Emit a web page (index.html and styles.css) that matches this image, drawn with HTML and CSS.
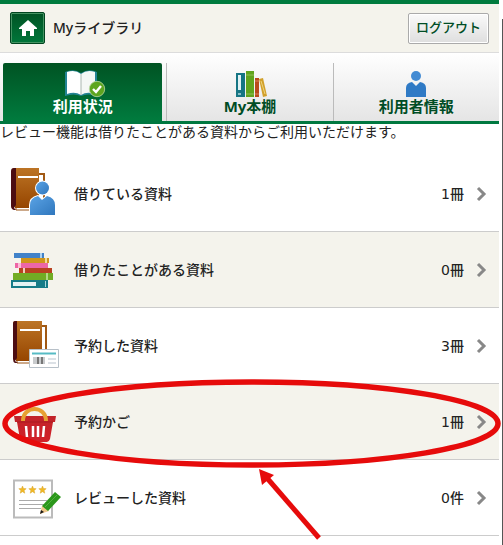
FILE: index.html
```html
<!DOCTYPE html>
<html lang="ja">
<head>
<meta charset="utf-8">
<meta name="viewport" content="width=device-width, initial-scale=1">
<title>Myライブラリ</title>
<link rel="stylesheet" href="styles.css">
</head>
<body>
<div class="page">
  <header class="header">
    <a class="home" href="#" aria-label="ホーム">
      <svg width="18" height="16" viewBox="0 0 18 16"><path d="M9 0 18 8v1h-3v7h-4v-5H7v5H3V9H0V8Z" fill="#fff"/></svg>
    </a>
    <h1 class="title">Myライブラリ</h1>
    <button class="logout" type="button">ログアウト</button>
  </header>

  <nav class="tabs">
    <a class="tab active" href="#">
      <svg width="42" height="28" viewBox="-2 0 42 28" overflow="visible">
        <path d="M1 2Q10-2 17 3 25-2 33 2V26Q24 23 17 26 10 23 1 26Z" fill="#238494"/>
        <path d="M3 2Q11-1 17 4V25Q11 21 3 24Z" fill="#fff"/>
        <path d="M31 2Q23-1 17 4V25Q23 21 31 24Z" fill="#f4f7f5"/>
        <path d="M17 4v21" stroke="#a9b6b0"/>
        <circle cx="33" cy="19" r="7.7" fill="#5da51f" stroke="#b9d8a5" stroke-width=".8"/>
        <path d="m29 19 3 3 5-6" fill="none" stroke="#fff" stroke-width="2.4"/>
      </svg>
      <span>利用状況</span>
    </a>
    <a class="tab" href="#">
      <svg width="32" height="28" viewBox="-1 0 32 28" overflow="visible">
        <path d="M1 3h9v24H1z" fill="#167584"/><path d="M3 5h3v15H3z" fill="#e1f2f4"/><path d="M3 23h3v2H3z" fill="#8bc1c8"/>
        <path d="M11 1h8v26h-8z" fill="#62a51e"/><path d="M11 5h8M11 24h8" stroke="#91bf55"/>
        <path d="M20 8h4v19h-4z" fill="#b94a1b"/><path d="M20 11h4M20 24h4" stroke="#d88158"/>
        <path d="m24 9 4-1 4 18-4 1Z" fill="#d1a02b"/><path d="m26 11 4 13" stroke="#f0d47c"/>
      </svg>
      <span>My本棚</span>
    </a>
    <a class="tab" href="#">
      <svg width="20" height="28" viewBox="0 0 20 28">
        <circle cx="10" cy="6" r="5" fill="#438bd3"/>
        <path d="M0 27v-9q0-5 6-6l4 4 4-4q6 1 6 6v9Z" fill="#2f7ac5"/>
      </svg>
      <span>利用者情報</span>
    </a>
  </nav>

  <main>
    <p class="notice">レビュー機能は借りたことがある資料からご利用いただけます。</p>
    <ul class="list">
      <li><a class="row" href="#">
        <svg class="icon" viewBox="8 8 54 60">
          <defs>
            <linearGradient id="leather" x2="0" y2="1"><stop stop-color="#bc7425"/><stop offset="1" stop-color="#964500"/></linearGradient>
            <linearGradient id="person" x2="1" y2="1"><stop stop-color="#5aa3e5"/><stop offset="1" stop-color="#3077bd"/></linearGradient>
          </defs>
          <path d="M15 18h29v32H33" fill="none" stroke="#a15914" stroke-width="2"/>
          <path d="M16 49h24v5H16z" fill="#fff" stroke="#9a5516"/>
          <path d="M14 12h25v40H15v-3h-3V14q0-2 2-2Z" fill="url(#leather)"/>
          <path d="M14 12h2v37l-2 3 2 2h-2q-3-1-3-4V15q0-3 3-3Z" fill="#4c0d12"/>
          <path d="M18 21h20" stroke="#fff" stroke-width="2"/>
          <path d="M30 59V49q0-7 8-9l4 4 5-4q8 2 8 9v10Z" fill="url(#person)" stroke="#fff" stroke-width="2" paint-order="stroke"/>
          <circle cx="42.500" cy="32" r="6.500" fill="url(#person)" stroke="#fff" stroke-width="2" paint-order="stroke"/>
        </svg>
        <span class="label">借りている資料</span><span class="count">1冊</span>
        <svg class="chevron" viewBox="0 0 12 16"><path d="m2 2 6 6-6 6"/></svg>
      </a></li>
      <li><a class="row" href="#">
        <svg class="icon" viewBox="8 8 54 60">
          <path d="M14 21h30v5H14z" fill="#4182c9"/><path d="M40 21h2v5h-2z" fill="#add1ef"/>
          <path d="M21 26h28v5H21z" fill="#cf951c"/><path d="M45 26h2v5h-2z" fill="#f1dc98"/>
          <path d="M15 31h33v5H15z" fill="#ed66a6"/><path d="M18 31h3v5h-3z" fill="#ffbad8"/>
          <path d="M19 36h33v5H19z" fill="#b94220"/><path d="M23 36h2v5h-2z" fill="#efd0bd"/>
          <path d="M13 41h40v7H13z" fill="#72ac24"/><path d="M46 41h2v7h-2z" fill="#b4d884"/>
          <path d="M11 48h37v8H11z" fill="#167b87"/><path d="M13 50h23v4H13z" fill="#e4f2f3"/><path d="M45 49h1v6h-1z" fill="#a9d8dc"/>
        </svg>
        <span class="label">借りたことがある資料</span><span class="count">0冊</span>
        <svg class="chevron" viewBox="0 0 12 16"><path d="m2 2 6 6-6 6"/></svg>
      </a></li>
      <li><a class="row" href="#">
        <svg class="icon" viewBox="8 8 54 60">
          <path d="M16 18h30v32H35" fill="none" stroke="#a15914" stroke-width="2"/>
          <path d="M17 50h24v5H17z" fill="#fff" stroke="#9a5516"/>
          <path d="M16 13h26v40H16v-3h-3V15q0-2 3-2Z" fill="url(#leather)"/>
          <path d="M15 13h2v37l-2 3 3 2h-3q-2-1-2-4V16q0-3 2-3Z" fill="#4c0d12"/>
          <path d="M20 22h20" stroke="#fff" stroke-width="2"/>
          <path d="M29.500 41.500h29v18h-29z" fill="#fff" stroke="#b7c0c8"/>
          <path d="M32 45.500h24" stroke="#56bbc4" stroke-width="2"/>
          <path d="M34 49v7m2-7v7m4-7v7m4-7v7" stroke="#92979b"/><path d="M38 49v7m4-7v7" stroke="#777" stroke-width="2"/>
          <path d="M48 51h8m-8 4h8" stroke="#dce1e6" stroke-width="2"/>
        </svg>
        <span class="label">予約した資料</span><span class="count">3冊</span>
        <svg class="chevron" viewBox="0 0 12 16"><path d="m2 2 6 6-6 6"/></svg>
      </a></li>
      <li class="marked"><a class="row" href="#">
        <svg class="icon" viewBox="8 8 54 60">
          <defs><linearGradient id="basket" x2="0" y2="1"><stop stop-color="#c12329"/><stop offset="1" stop-color="#d22129"/></linearGradient></defs>
          <path d="M14 32h42l-1 6h-2l-3 17q-1 3-3 3H23q-2 0-3-3l-3-17h-2Z" fill="url(#basket)"/>
          <path d="M17 38h36" stroke="#a91d23"/>
          <path d="m26 42 1 11m6-11v11m5-11v11m6-11-1 11" stroke="#fff" stroke-width="2.500"/>
          <path d="M23 37c0-16 23-16 23 0" fill="none" stroke="#e7a031" stroke-width="4"/>
        </svg>
        <span class="label">予約かご</span><span class="count">1冊</span>
        <svg class="chevron" viewBox="0 0 12 16"><path d="m2 2 6 6-6 6"/></svg>
      </a>
      <svg class="callout" viewBox="0 0 503 170" preserveAspectRatio="none" aria-hidden="true">
        <ellipse cx="251.500" cy="47.500" rx="246.500" ry="41.500" fill="none" stroke="#e60b0b" stroke-width="5.500"/>
        <path d="m319 162-52-60" stroke="#e60b0b" stroke-width="5"/>
        <path d="m259 93 15 6-12 10Z" fill="#e60b0b"/>
      </svg></li>
      <li><a class="row" href="#">
        <svg class="icon" viewBox="8 8 54 60">
          <path d="M14 20.500h38v37H14z" fill="#fff" stroke="#bbb" stroke-width="2"/>
          <g fill="#f1b925" stroke="#d9a52b" stroke-width=".5">
            <path id="star" d="m22.500 26 1 2.500 2.700.2-2.100 1.800.7 2.700-2.300-1.500-2.300 1.500.7-2.700-2.100-1.800 2.700-.2Z"/>
            <use href="#star" x="10"/><use href="#star" x="20"/>
          </g>
          <path d="M19 40.500h28M19 44.500h25M19 48.500h22" stroke="#aaa"/>
          <path d="m40 54 2-8 4 1 3 4Z" fill="#f0c789"/><path d="m40 54 1-4 3 2Z" fill="#181818"/>
          <path d="M42 46 55 32l6 5-13 14Z" fill="#2b971b"/><path d="m45 47 13-13" stroke="#53b13d"/>
        </svg>
        <span class="label">レビューした資料</span><span class="count">0件</span>
        <svg class="chevron" viewBox="0 0 12 16"><path d="m2 2 6 6-6 6"/></svg>
      </a></li>
    </ul>
  </main>
</div>
<div class="edge"></div>
</body>
</html>
```

FILE: styles.css
```css
* {
  box-sizing: border-box;
}

body {
  display: flex;
  min-height: 100vh;
  margin: 0;
  background: #fff;
  color: #222;
  font-family: "DejaVu Sans", "Noto Sans CJK JP", sans-serif;
  font-size: 14px;
  line-height: 16px;
}

a {
  color: inherit;
  text-decoration: none;
}

.page {
  flex: 1;
  min-width: 0;
}

.edge {
  width: 1px;
  margin: 19px 0 0 3px;
  background: #555;
}

.header {
  display: flex;
  align-items: center;
  gap: 8px;
  height: 53px;
  padding: 0 10px;
  border-top: 4px solid #007b3e;
  border-bottom: 1px solid #dcdcdc;
  background: #f4f3ec;
}

.home {
  display: flex;
  align-items: center;
  justify-content: center;
  width: 35px;
  height: 32px;
  border: 1px solid #00451f;
  border-radius: 2px;
  box-shadow: inset 0 0 0 1px #459363;
  background: linear-gradient(#005324, #00763a);
}

.title {
  flex: 1;
  margin: 0;
  font-family: "Noto Sans", "Noto Sans CJK JP", sans-serif;
  font-size: 14px;
  font-weight: 500;
}

.logout {
  height: 31px;
  padding: 0 7px 4px;
  border: 1px solid #aaa;
  border-radius: 2px;
  box-shadow: inset 0 0 0 1px #fff;
  background: linear-gradient(#fafafa, #dedede);
  color: #004d25;
  font-family: "Noto Sans CJK JP", sans-serif;
  font-size: 13px;
  font-weight: 500;
}

.tabs {
  display: grid;
  grid-template-columns: repeat(3, 1fr);
  padding-top: 10px;
  border-bottom: 3px solid #007840;
  background: linear-gradient(#fff, #e5e5e5);
}

.tab {
  display: flex;
  flex-direction: column;
  align-items: center;
  height: 58px;
  padding-top: 7px;
  border-left: 1px solid #bbb;
  color: #004d25;
  font-family: "Noto Sans", "Noto Sans CJK JP", sans-serif;
  font-size: 15px;
  font-weight: 700;
}

.tab.active {
  margin: 0 4px 0 3px;
  border: 0;
  border-radius: 2px 2px 0 0;
  background: linear-gradient(#005323, #007b3e);
  color: #fff;
}

.notice {
  margin: 0;
  padding-bottom: 16px;
}

.list {
  margin: 0;
  padding: 0;
  list-style: none;
}

.list li {
  border-bottom: 1px solid #ccc;
}

.list li:nth-child(even) {
  background: #f4f3ec;
}

.row {
  display: flex;
  align-items: center;
  height: 75px;
  padding: 0 11px 0 8px;
  font-weight: 500;
}

.icon {
  width: 54px;
  height: 60px;
}

.label {
  flex: 1;
  padding-left: 12px;
}

.chevron {
  width: 12px;
  height: 16px;
  margin-left: 12px;
  fill: none;
  stroke: #888;
  stroke-width: 3;
}

.marked {
  position: relative;
}

.callout {
  position: absolute;
  z-index: 1;
  top: -8px;
  left: 0;
  width: calc(100% + 4px);
  height: 170px;
  pointer-events: none;
}
```
